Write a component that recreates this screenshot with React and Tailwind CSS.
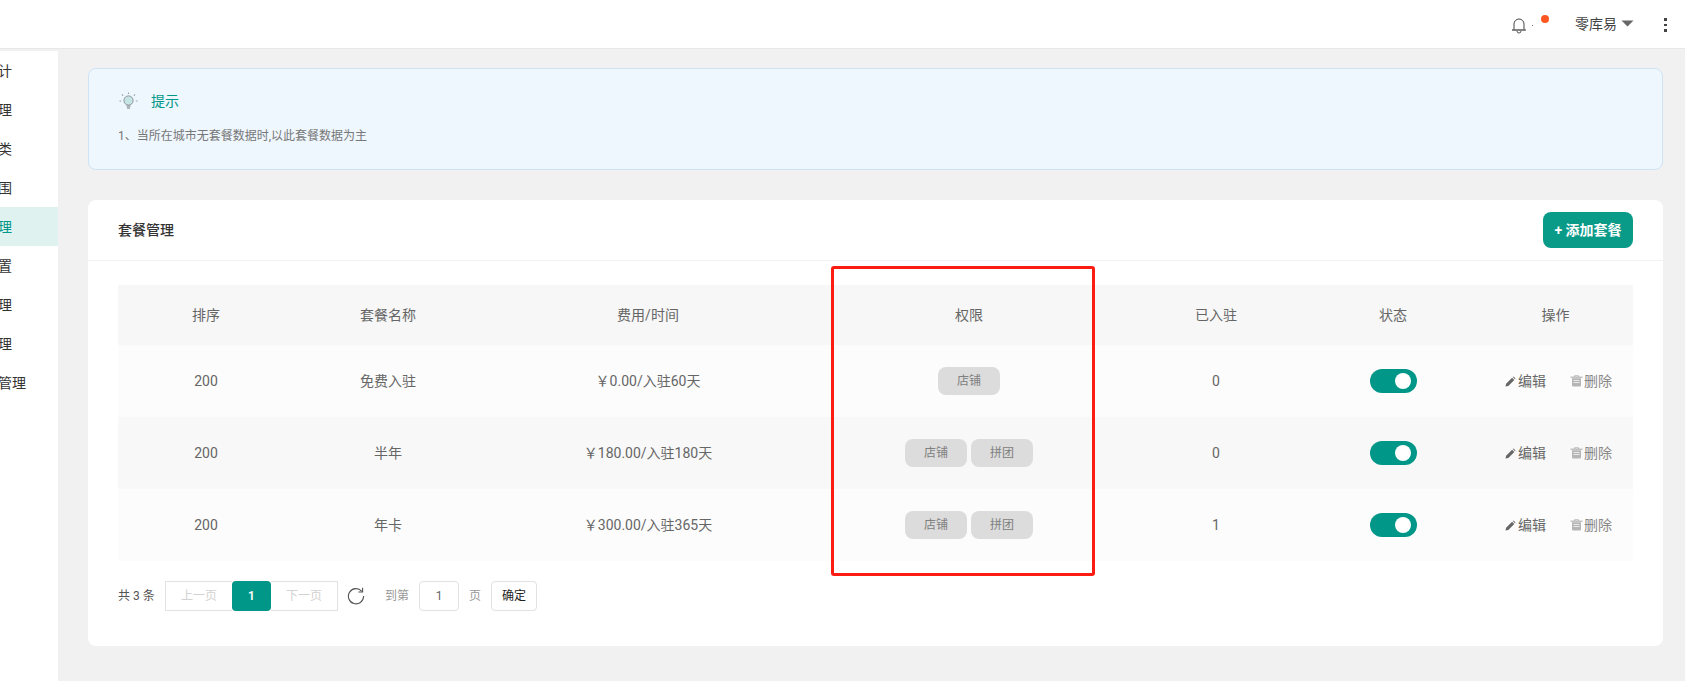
import React from "react";

const sideItems = ["计", "理", "类", "围", "理", "置", "理", "理", "管理"];
const rows = [
  { name: "免费入驻", fee: "￥0.00/入驻60天", perms: ["店铺"], count: 0, bg: "bg-[#fcfcfc]" },
  { name: "半年", fee: "￥180.00/入驻180天", perms: ["店铺", "拼团"], count: 0, bg: "bg-[#f8f8f8]" },
  { name: "年卡", fee: "￥300.00/入驻365天", perms: ["店铺", "拼团"], count: 1, bg: "bg-[#fcfcfc]" },
];

function Bulb() {
  return (
    <svg width="20" height="20" viewBox="0 0 20 20" fill="none" className="shrink-0">
      <circle cx="10.500" cy="9.500" r="4.600" fill="#c5e4e4" stroke="#8d9499" strokeWidth="1" />
      <path d="M8.500 15h4M9 17h3" stroke="#9a9fa3" strokeWidth="1.400" />
      <path d="M10.500 1.500v1.600M4 3.500l1.200 1.200M17 3.500l-1.200 1.200M1.500 10h1.700M17.800 10h1.700" stroke="#9a9fa3" strokeWidth="1.100" />
    </svg>
  );
}

function Pencil() {
  return (
    <svg width="11" height="11" viewBox="0 0 11 11" className="shrink-0">
      <path d="M0.500 10.500l0.600-2.800 6-6 2.200 2.200-6 6zM7.800 0.900l0.700-0.500 2.100 2.100-0.600 0.700z" fill="#666" />
    </svg>
  );
}

function Trash() {
  return (
    <svg width="13" height="12" viewBox="0 0 13 12" fill="none" className="shrink-0">
      <path d="M0.500 2.200h12" stroke="#b5b5b5" strokeWidth="1.200" />
      <path d="M4.500 2V0.800h4V2" stroke="#b5b5b5" strokeWidth="1" />
      <path d="M2 3.200h9v7.300a1 1 0 0 1-1 1H3a1 1 0 0 1-1-1z" fill="#b5b5b5" />
      <path d="M3.500 5.500h6M3.500 7.500h6" stroke="#eee" strokeWidth="0.900" />
    </svg>
  );
}

function Refresh() {
  return (
    <svg width="18" height="18" viewBox="0 0 18 18" fill="none" className="shrink-0">
      <path d="M14.800 4.300A7.600 7.600 0 1 0 16.600 9" stroke="#555" strokeWidth="1.100" />
      <path d="M15.600 0.800v4.200h-4.200" stroke="#555" strokeWidth="1.100" />
    </svg>
  );
}

function Toggle() {
  return (
    <span className="inline-flex w-[47px] h-6 rounded-full bg-[#009688] items-center justify-end pr-[6px] align-middle">
      <span className="w-4 h-4 rounded-full bg-white" />
    </span>
  );
}

function Th({ children }) {
  return <th className="font-normal text-sm text-[#666] text-center p-0">{children}</th>;
}

export default function App() {
  return (
    <div className="relative h-[681px] w-[1685px] overflow-hidden bg-[#f1f1f1] text-sm text-[#666] font-['Roboto','Noto_Sans_CJK_SC',sans-serif]">
      <header className="h-[49px] bg-white border-b border-[#e8e8e8] flex items-center justify-end pr-[18px] relative">
        <svg width="16" height="17" viewBox="0 0 16 17" fill="none" className="shrink-0 mt-[2px]">
          <path d="M3 12.500V7a5 5 0 0 1 10 0v5.500" stroke="#444" strokeWidth="1" />
          <path d="M1 13h14" stroke="#333" strokeWidth="1.200" />
          <path d="M6 14a2 2 0 0 0 4 0" stroke="#555" strokeWidth="1" />
        </svg>
        <span className="ml-[5px] w-px h-px bg-[#777] mt-[3px]" />
        <span className="w-2 h-2 rounded-full bg-[#ff5722] ml-[8px] -mt-[10px]" />
        <span className="ml-[26px] text-sm text-[#444]">零库易</span>
        <svg width="13" height="7" viewBox="0 0 13 7" className="ml-[4px] shrink-0 -mt-[1px]">
          <path d="M0.500 0.500h12L6.500 6.500z" fill="#666" />
        </svg>
        <span className="ml-[30px] w-[3px] flex flex-col gap-[3px] mt-[2px]">
          <i className="w-[2.500px] h-[2.500px] bg-[#444] block" />
          <i className="w-[2.500px] h-[2.500px] bg-[#444] block" />
          <i className="w-[2.500px] h-[2.500px] bg-[#444] block" />
        </span>
      </header>

      <div className="flex items-stretch h-[632px]">
        <aside className="w-[58px] mt-[2px] bg-white shrink-0 overflow-hidden">
          {sideItems.map((t, i) => (
            <div
              key={i}
              className={`h-[39px] flex items-center -ml-[2px] text-sm whitespace-nowrap ${i === 4 ? "bg-[#e0f2ef] text-[#009688]" : "text-[#333]"}`}
            >
              {t}
            </div>
          ))}
        </aside>

        <main className="w-[1575px] ml-[30px] pt-[19px]">
          <section className="h-[102px] rounded-lg border border-[#cfe3f7] bg-[#eef6fe] pl-[29px] pt-[22px]">
            <div className="flex items-center h-5">
              <Bulb />
              <span className="ml-[13px] text-[#009688] text-sm">提示</span>
            </div>
            <p className="mt-[17px] text-xs text-[#777]">1、当所在城市无套餐数据时,以此套餐数据为主</p>
          </section>

          <section className="mt-[30px] h-[446px] rounded-lg bg-white">
            <div className="h-[61px] border-b border-[#f2f2f2] flex items-center justify-between px-[30px]">
              <h2 className="text-sm font-medium text-[#333]">套餐管理</h2>
              <button className="h-9 w-[90px] rounded-lg bg-[#0a9a88] text-white text-sm font-semibold">+ 添加套餐</button>
            </div>

            <div className="px-[30px] pt-6">
              <table className="w-[1515px] table-fixed border-collapse">
                <colgroup>
                  <col className="w-[176px]" />
                  <col className="w-[188px]" />
                  <col className="w-[332px]" />
                  <col className="w-[310px]" />
                  <col className="w-[184px]" />
                  <col className="w-[170px]" />
                  <col className="w-[155px]" />
                </colgroup>
                <thead>
                  <tr className="h-[60px] bg-[#f7f7f7]">
                    <Th>排序</Th>
                    <Th>套餐名称</Th>
                    <Th>费用/时间</Th>
                    <Th>权限</Th>
                    <Th>已入驻</Th>
                    <Th>状态</Th>
                    <Th>操作</Th>
                  </tr>
                </thead>
                <tbody>
                  {rows.map((r) => (
                    <tr key={r.name} className={`h-[72px] ${r.bg}`}>
                      <td className="text-center p-0">200</td>
                      <td className="text-center p-0">{r.name}</td>
                      <td className="text-center p-0">{r.fee}</td>
                      <td className="p-0">
                        <div className="flex justify-center gap-1">
                          {r.perms.map((p) => (
                            <span key={p} className="w-[62px] h-7 rounded-lg bg-[#dcdcdc] text-xs text-[#808080] flex items-center justify-center">
                              {p}
                            </span>
                          ))}
                        </div>
                      </td>
                      <td className="text-center p-0">{r.count}</td>
                      <td className="text-center p-0"><Toggle /></td>
                      <td className="p-0">
                        <div className="flex items-center justify-center pl-[6px]">
                          <Pencil />
                          <span className="ml-[2px]">编辑</span>
                          <span className="ml-6 flex items-center">
                            <Trash />
                            <span className="ml-px text-[#888]">删除</span>
                          </span>
                        </div>
                      </td>
                    </tr>
                  ))}
                </tbody>
              </table>

              <nav className="mt-[20px] flex items-center h-[30px] text-xs">
                <span className="text-[#555] w-[47px]">共 3 条</span>
                <div className="flex h-[30px] items-stretch">
                  <span className="w-[67px] border border-[#e2e2e2] border-r-0 flex items-center justify-center text-[#d2d2d2]">上一页</span>
                  <span className="w-[39px] rounded-sm bg-[#009688] text-white font-semibold flex items-center justify-center">1</span>
                  <span className="w-[67px] border border-[#e2e2e2] border-l-0 flex items-center justify-center text-[#d2d2d2]">下一页</span>
                </div>
                <span className="ml-[9px]"><Refresh /></span>
                <span className="ml-[20px] text-[#999]">到第</span>
                <span className="ml-[10px] w-10 h-[30px] border border-[#e2e2e2] rounded-sm flex items-center justify-center text-[#666]">1</span>
                <span className="ml-[10px] text-[#999]">页</span>
                <span className="ml-[10px] w-[46px] h-[30px] border border-[#e2e2e2] rounded-sm flex items-center justify-center text-[#222]">确定</span>
              </nav>
            </div>
          </section>
        </main>
      </div>

      <div className="absolute left-[831px] top-[266px] w-[264px] h-[310px] border-[3px] border-[#fb1d12] rounded-[3px]" />
    </div>
  );
}
